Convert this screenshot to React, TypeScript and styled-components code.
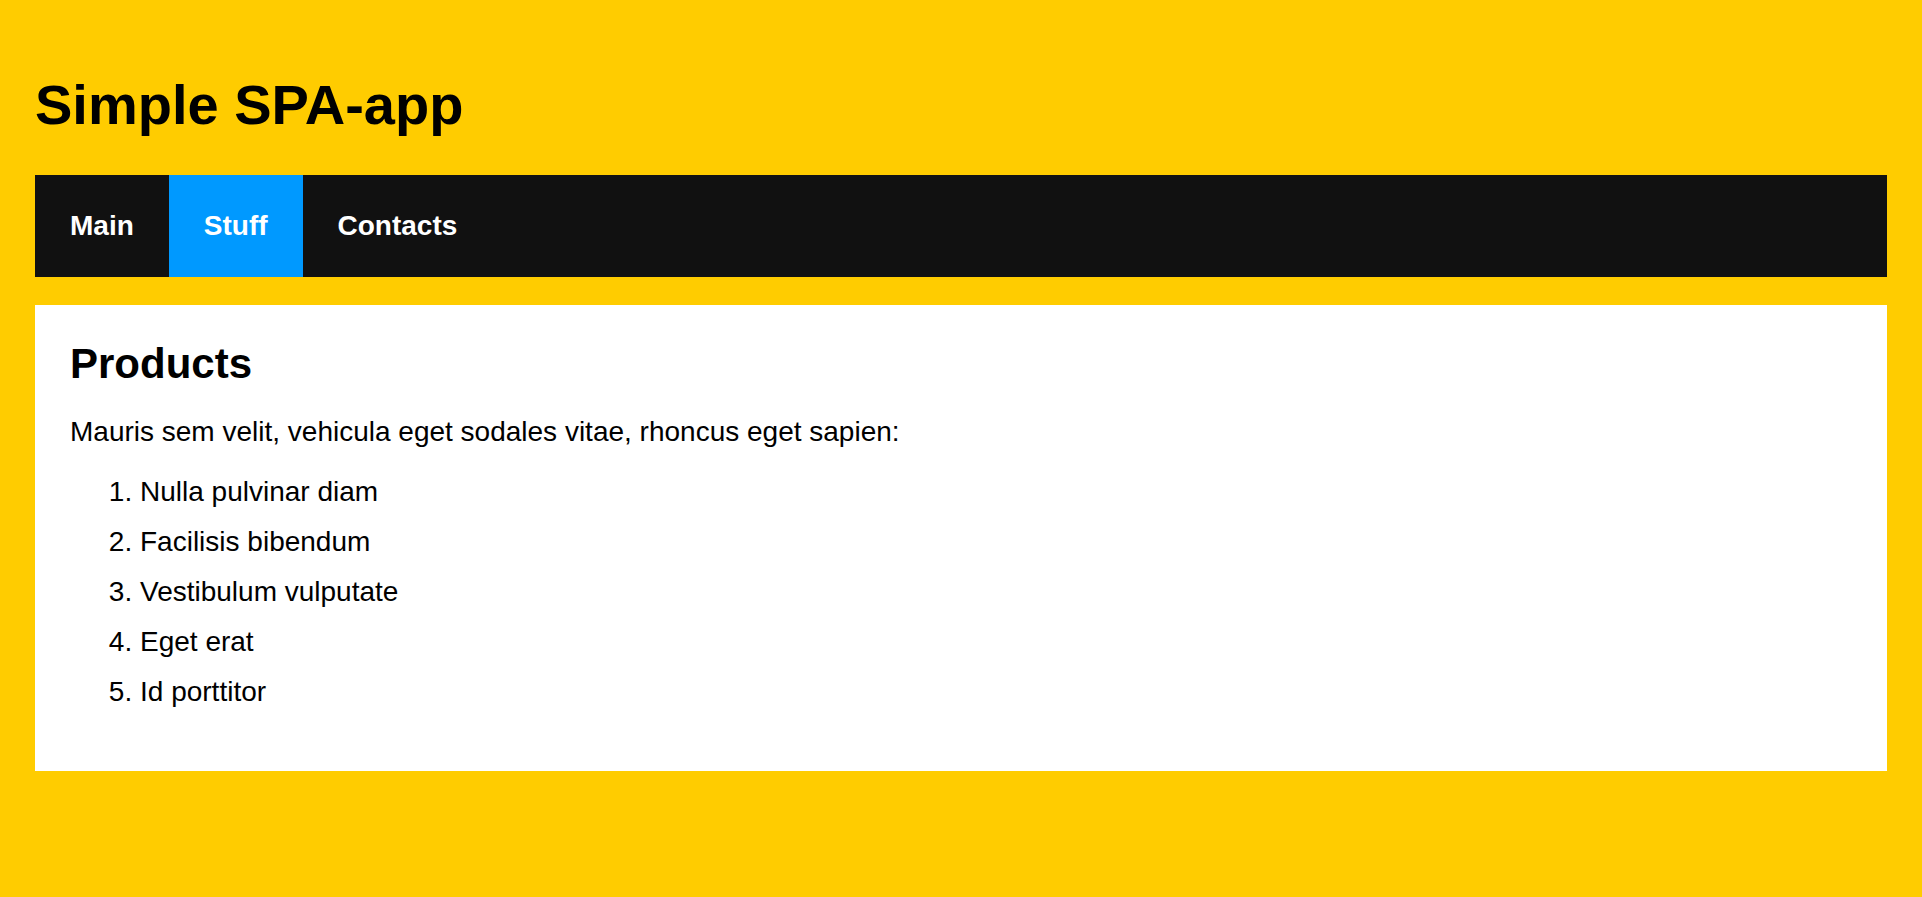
import React, { useState } from "react";
import styled, { createGlobalStyle } from "styled-components";

const GlobalStyle = createGlobalStyle`
  body {
    margin: 0;
    padding: 35px;
    background: #ffcc00;
    color: #000;
    font-family: Arial, "Liberation Sans", sans-serif;
    font-size: 28px;
    line-height: 32px;
  }
`;

const Title = styled.h1`
  margin: 38px 0;
  font-size: 56px;
  line-height: 64px;
`;

const NavList = styled.ul`
  display: flex;
  margin: 0;
  padding: 0;
  list-style: none;
  background: #111;
`;

const NavLink = styled.a<{ $active: boolean }>`
  display: block;
  padding: 35px;
  color: #fff;
  font-weight: bold;
  text-decoration: none;
  background: ${({ $active }) => ($active ? "#0099ff" : "transparent")};
`;

const Content = styled.main`
  margin-top: 28px;
  padding: 35px;
  background: #fff;
`;

const Heading = styled.h2`
  margin: 0;
  font-size: 42px;
  line-height: 48px;
`;

const Intro = styled.p`
  margin: 28px 0;
`;

const ProductList = styled.ol`
  margin: 28px 0;
  padding-left: 70px;
`;

const Product = styled.li`
  margin-bottom: 18px;
`;

const pages = ["Main", "Stuff", "Contacts"];
const products = [
  "Nulla pulvinar diam",
  "Facilisis bibendum",
  "Vestibulum vulputate",
  "Eget erat",
  "Id porttitor",
];

export default function App() {
  const [active, setActive] = useState("Stuff");
  return (
    <>
      <GlobalStyle />
      <Title>Simple SPA-app</Title>
      <nav>
        <NavList>
          {pages.map((page) => (
            <li key={page}>
              <NavLink
                href={`#/${page.toLowerCase()}`}
                $active={page === active}
                onClick={() => setActive(page)}
              >
                {page}
              </NavLink>
            </li>
          ))}
        </NavList>
      </nav>
      <Content>
        <Heading>Products</Heading>
        <Intro>Mauris sem velit, vehicula eget sodales vitae, rhoncus eget sapien:</Intro>
        <ProductList>
          {products.map((product) => (
            <Product key={product}>{product}</Product>
          ))}
        </ProductList>
      </Content>
    </>
  );
}
